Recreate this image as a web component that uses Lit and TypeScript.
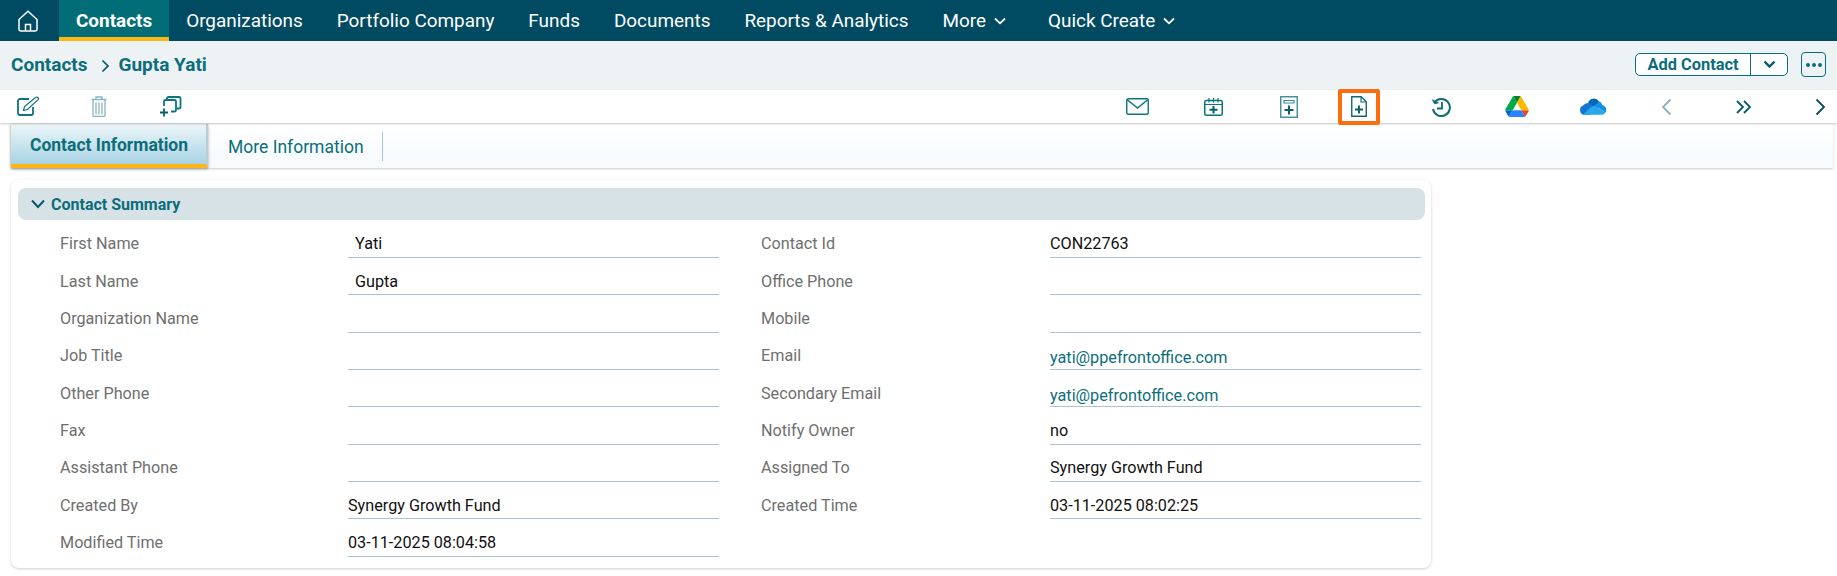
import { LitElement, html, css, svg } from "lit";
import { customElement } from "lit/decorators.js";

type Cell = { t: string; pad?: boolean; link?: boolean };
const left: [string, Cell][] = [
  ["First Name", { t: "Yati", pad: true }],
  ["Last Name", { t: "Gupta", pad: true }],
  ["Organization Name", { t: "" }],
  ["Job Title", { t: "" }],
  ["Other Phone", { t: "" }],
  ["Fax", { t: "" }],
  ["Assistant Phone", { t: "" }],
  ["Created By", { t: "Synergy Growth Fund" }],
  ["Modified Time", { t: "03-11-2025 08:04:58" }],
];
const right: [string, Cell][] = [
  ["Contact Id", { t: "CON22763" }],
  ["Office Phone", { t: "" }],
  ["Mobile", { t: "" }],
  ["Email", { t: "yati@ppefrontoffice.com", link: true }],
  ["Secondary Email", { t: "yati@pefrontoffice.com", link: true }],
  ["Notify Owner", { t: "no" }],
  ["Assigned To", { t: "Synergy Growth Fund" }],
  ["Created Time", { t: "03-11-2025 08:02:25" }],
];

const chev = html`<svg class="chev" viewBox="0 0 12 8" width="12" height="8"><path d="M1 1.500 6 6.300l5-4.800" fill="none" stroke="currentColor" stroke-width="1.800"/></svg>`;
const chevBig = html`<svg viewBox="0 0 14 10" width="14" height="10"><path d="M1 1.500 7 8l6-6.500" fill="none" stroke="#07596c" stroke-width="2"/></svg>`;

const T = "#0b7480";
const ic = (w: number, h: number, vb: string, body: unknown) =>
  html`<svg width=${w} height=${h} viewBox=${vb} fill="none" stroke=${T} stroke-width="1.500">${body}</svg>`;

const icons = {
  edit: ic(22, 21, "0 0 22 21", svg`<path d="M12 3H3a2 2 0 0 0-2 2v12a2 2 0 0 0 2 2h11a2 2 0 0 0 2-2v-6" stroke-width="1.800"/><path d="M6.500 14.500l1-4L18.500 1.500c.8-.7 1.800-.7 2.400 0s.6 1.700-.1 2.400L10.500 13.500z" stroke-width="1.200"/>`),
  trash: ic(16, 21, "0 0 16 21", svg`<g stroke="#87b8c1" stroke-width="1.300"><path d="M.6 3.500h14.800M5 3.200V1h6v2.200"/><path d="M2 4v15.500a1 1 0 0 0 1 1h10a1 1 0 0 0 1-1V4"/><path d="M5 6.500v12M8 6.500v12M11 6.500v12"/></g>`),
  copy: ic(23, 21, "0 0 23 21", svg`<path d="M8 4V2.500A1.500 1.500 0 0 1 9.500 1h10.500A1.500 1.500 0 0 1 21.500 2.500v8.500a1.500 1.500 0 0 1-1.500 1.500H18" stroke-width="1.800"/><path d="M5 10V5.500A1.500 1.500 0 0 1 6.500 4h9A1.500 1.500 0 0 1 17 5.500V14a1.500 1.500 0 0 1-1.500 1.500H12" stroke-width="1.800"/><path d="M1 16.500h8M5 12.500v8" stroke="#0a5f6b" stroke-width="1.800"/>`),
  mail: ic(23, 17, "0 0 23 17", svg`<rect x=".75" y=".75" width="21.500" height="15.500" rx="1.500" stroke-width="1.400"/><path d="M1 1.500 11.500 10 22 1.500" stroke-width="1.400"/>`),
  cal: ic(19, 18, "0 0 19 18", svg`<rect x=".75" y="2.500" width="17.500" height="14.750" rx="1.500"/><path d="M.75 6.500h17.500M5 0v4.500M9.500 0v4.500M14 0v4.500" stroke-width="1.200"/><path d="M9.500 8v7.500M5.500 11.700h8" stroke="#0a5f6b" stroke-width="2"/>`),
  form: ic(18, 22, "0 0 18 22", svg`<rect x=".75" y=".75" width="16.500" height="20.500" stroke="#3b8d99" stroke-width="1.400"/><path d="M4 4.500h10v2.500H4z" stroke="#3b8d99" stroke-width="1.200"/><path d="M9 9.500v9M4.500 14h9" stroke="#0a5f6b" stroke-width="2"/>`),
  doc: ic(16, 21, "0 0 16 21", svg`<path d="M.75.75h9.500l5 5v14.500H.75z" stroke-width="1.400" stroke="#0f6878"/><path d="M10 1v5h5" stroke-width="1.100" stroke="#0f6878"/><path d="M8 9.500v8M4 13.500h8" stroke="#0a5f6b" stroke-width="1.900"/>`),
  hist: ic(20, 20, "0 0 20 20", svg`<path d="M3.500 5.500A8.500 8.500 0 1 1 2 12" stroke="#0c6b76" stroke-width="2"/><path d="M.5 2 3.500 7.300l5-1.300z" fill="#0c6b76" stroke="none"/><path d="M11 5v6.500H6" stroke="#0c6b76" stroke-width="1.800"/>`),
  drive: html`<svg width="24" height="21" viewBox="0 0 87.300 78"><path d="m6.600 66.850 3.850 6.650c.8 1.400 1.950 2.500 3.300 3.300l13.750-23.800H0c0 1.550.4 3.100 1.200 4.500z" fill="#0066da"/><path d="M43.650 25 29.900 1.200c-1.350.8-2.500 1.900-3.300 3.300L1.200 48.500c-.8 1.400-1.200 2.950-1.200 4.500h27.500z" fill="#00ac47"/><path d="M73.550 76.800c1.350-.8 2.500-1.900 3.300-3.300l1.600-2.750 7.650-13.250c.8-1.400 1.200-2.950 1.200-4.500H59.800l5.850 11.500z" fill="#ea4335"/><path d="M43.650 25 57.400 1.200C56.050.4 54.500 0 52.900 0H34.400c-1.600 0-3.150.45-4.500 1.200z" fill="#00832d"/><path d="M59.800 53H27.500L13.750 76.800c1.350.8 2.900 1.200 4.500 1.200h50.800c1.600 0 3.150-.45 4.500-1.200z" fill="#2684fc"/><path d="m73.400 26.500-12.700-22c-.8-1.400-1.950-2.500-3.300-3.300L43.650 25 59.800 53h27.450c0-1.550-.4-3.100-1.200-4.500z" fill="#ffba00"/></svg>`,
  cloud: html`<svg width="26" height="17" viewBox="0 0 26 17"><path d="M8 5.500a6 6 0 0 1 11-2 5 5 0 0 1 3 3.500L14 12z" fill="#0364b8"/><path d="M9 16.800H5A4.800 4.800 0 0 1 3.200 7.500 6 6 0 0 1 10 5.300l4 3.200-3 8z" fill="#0f78d4"/><path d="M19 3.500a5 5 0 0 1 3 3.500 4.900 4.900 0 0 1 3.400 7.600L14.500 7.500z" fill="#1490df"/><path d="M4 15.800a4 4 0 0 0 2 1h16a3.800 3.800 0 0 0 3.400-2.200L14.500 7.500l-4 2z" fill="#28a8ea"/></svg>`,
  prev: html`<svg class="nudge" width="11" height="18" viewBox="0 0 11 18" fill="none" stroke="#8fb0bb" stroke-width="1.800"><path d="M9.500 1.500 2 9l7.500 7.500"/></svg>`,
  dbl: html`<svg width="16" height="14" viewBox="0 0 16 14" fill="none" stroke="#07596c" stroke-width="1.800"><path d="M1 1l6 6-6 6M8 1l6 6-6 6"/></svg>`,
  next: html`<svg width="11" height="18" viewBox="0 0 11 18" fill="none" stroke="#0a4a60" stroke-width="1.800"><path d="M1.500 1.500 9 9l-7.500 7.500"/></svg>`,
};

@customElement("app-root")
export class AppRoot extends LitElement {
  static styles = css`
    :host { display: block; font-family: Roboto, "Liberation Sans", sans-serif; background: #fff; height: 576px; overflow: hidden; }
    .nav { display: flex; align-items: stretch; height: 41px; background: #004b62; color: #fff; font-size: 18.920px; }
    .home { width: 59px; display: flex; align-items: center; padding-left: 18px; box-sizing: border-box; }
    .item { display: flex; align-items: center; padding: 0 17px; gap: 8px; white-space: nowrap; }
    .item.active { background: #006d77; font-weight: 700; border-bottom: 4px solid #fdb714; padding-top: 4px; box-sizing: border-box; }
    .item.more { padding-right: 25px; }
    .crumb { height: 49px; background: #edf2f5; display: flex; align-items: center; padding: 0 11px 2px 11px; box-sizing: border-box; color: #0b6e7a; font-weight: 700; font-size: 19px; }
    .crumb .sep { margin: 2px 9px 0 13px; display: flex; }
    .actions { margin-left: auto; display: flex; align-items: center; gap: 13px; }
    .split { display: flex; height: 23px; width: 153px; box-sizing: border-box; border: 1px solid #0b6e7a; border-radius: 5px; background: #fff; font-size: 16.400px; }
    .split .main { flex: 1; display: flex; align-items: center; justify-content: center; border-right: 1px solid #0b6e7a; }
    .split .drop { width: 36px; display: flex; align-items: center; justify-content: center; color: #07596c; }
    .dots { width: 25px; height: 25px; box-sizing: border-box; border: 1px solid #0b6e7a; border-radius: 4px; display: flex; align-items: center; justify-content: center; gap: 2px; }
    .dots i { width: 4px; height: 4px; border-radius: 50%; background: #0b6e7a; }
    .tools { height: 33px; display: flex; align-items: center; background: #fff; box-shadow: 0 1px 2px rgba(0,0,0,.22); position: relative; }
    .tools .l { display: flex; align-items: center; padding-left: 17px; gap: 52px; }
    .tools .r { margin-left: auto; display: flex; align-items: center; gap: 41.800px; }
    .cell { width: 34px; height: 33px; display: flex; align-items: center; justify-content: center; }
    .nudge { margin-right: 3px; }
    .hl { width: 42px; height: 36px; flex: none; box-sizing: border-box; border: 4px solid #f96f10; border-radius: 2px; display: flex; align-items: center; justify-content: center; margin: 0 2.600px 0 -10.600px; }
    .tabs { margin: 1px 4px 0 11px; height: 44px; display: flex; background: linear-gradient(#fff, #f5fafd); box-shadow: 0 1px 2px rgba(0,0,0,.2); font-size: 17.500px; color: #0b6e7a; }
    .tab { display: flex; align-items: center; }
    .tab.on { width: 197px; justify-content: center; font-weight: 700; box-sizing: border-box; padding: 2px 0 0 1px; background: linear-gradient(#edf6f9, #a8d3e3); border-bottom: 4px solid #fdb714; border-right: 2px solid #b9cdd4; box-shadow: 0 1px 3px rgba(0,0,0,.35); }
    .tab.off { padding: 2px 19px 0 20px; position: relative; }
    .tab.off::after { content: ""; position: absolute; right: 0; top: 8px; bottom: 7px; width: 1px; background: #a9c4cf; }
    .card { margin: 12px 0 0 11px; width: 1420px; height: 388px; box-sizing: border-box; background: #fff; border-radius: 8px; box-shadow: 0 1px 3px rgba(0,0,0,.2); padding: 8px 6px 0 7px; }
    .head { height: 32px; background: #d7e2e7; border-radius: 8px; display: flex; align-items: center; padding-left: 13px; gap: 7px; font-weight: 700; font-size: 16px; color: #0b6e7a; }
    .head span { margin-left: -1px; }
    .body { display: grid; grid-template-columns: 659px 660px; column-gap: 42px; padding: 0.600px 0 0 42px; }
    .row { height: 37.340px; display: grid; grid-template-columns: 288px 371px; box-sizing: border-box; font-size: 16.200px; }
    .col2 .row { grid-template-columns: 289px 371px; }
    .lab { color: #6f6f6f; padding-top: 13.890px; line-height: 20px; }
    .val { border-bottom: 1px solid #a9c4d0; padding-top: 13.890px; line-height: 20px; color: #111; box-sizing: border-box; white-space: nowrap; }
    .val.pad { padding-left: 7px; }
    .val.link { color: #0b6e7a; padding-top: 15.890px; }
  `;

  private rows(list: [string, Cell][], cls: string) {
    return html`<div class=${cls}>${list.map(([l, v]) => html`<div class="row"><div class="lab">${l}</div><div class="val ${v.pad ? "pad" : ""} ${v.link ? "link" : ""}">${v.t}</div></div>`)}</div>`;
  }

  render() {
    return html`
      <div class="nav">
        <div class="home"><svg width="20" height="22" viewBox="0 0 20 22" fill="none" stroke="#fff" stroke-width="1.500"><path d="M1 9.500 10 1.200l9 8.300V19a2 2 0 0 1-2 2H3a2 2 0 0 1-2-2z"/><path d="M7.500 21v-6.500h5V21"/></svg></div>
        <div class="item active">Contacts</div>
        <div class="item">Organizations</div>
        <div class="item">Portfolio Company</div>
        <div class="item">Funds</div>
        <div class="item">Documents</div>
        <div class="item">Reports &amp; Analytics</div>
        <div class="item more">More ${chev}</div>
        <div class="item">Quick Create ${chev}</div>
      </div>
      <div class="crumb">
        <span>Contacts</span>
        <span class="sep"><svg width="9" height="14" viewBox="0 0 9 14" fill="none" stroke="#07596c" stroke-width="1.700"><path d="M1.500 1.500 7 7l-5.500 5.500"/></svg></span>
        <span>Gupta Yati</span>
        <div class="actions">
          <div class="split"><div class="main">Add Contact</div><div class="drop"><svg width="13" height="9" viewBox="0 0 13 9" fill="none" stroke="currentColor" stroke-width="2.400"><path d="M1.500 1.500 6.500 6.500l5-5"/></svg></div></div>
          <div class="dots"><i></i><i></i><i></i></div>
        </div>
      </div>
      <div class="tools">
        <div class="l">${icons.edit}${icons.trash}${icons.copy}</div>
        <div class="r">
          <div class="cell">${icons.mail}</div>
          <div class="cell">${icons.cal}</div>
          <div class="cell">${icons.form}</div>
          <div class="hl">${icons.doc}</div>
          <div class="cell">${icons.hist}</div>
          <div class="cell">${icons.drive}</div>
          <div class="cell">${icons.cloud}</div>
          <div class="cell">${icons.prev}</div>
          <div class="cell">${icons.dbl}</div>
          <div class="cell">${icons.next}</div>
        </div>
      </div>
      <div class="tabs">
        <div class="tab on">Contact Information</div>
        <div class="tab off">More Information</div>
      </div>
      <div class="card">
        <div class="head">${chevBig}<span>Contact Summary</span></div>
        <div class="body">${this.rows(left, "col1")}${this.rows(right, "col2")}</div>
      </div>
    `;
  }
}
